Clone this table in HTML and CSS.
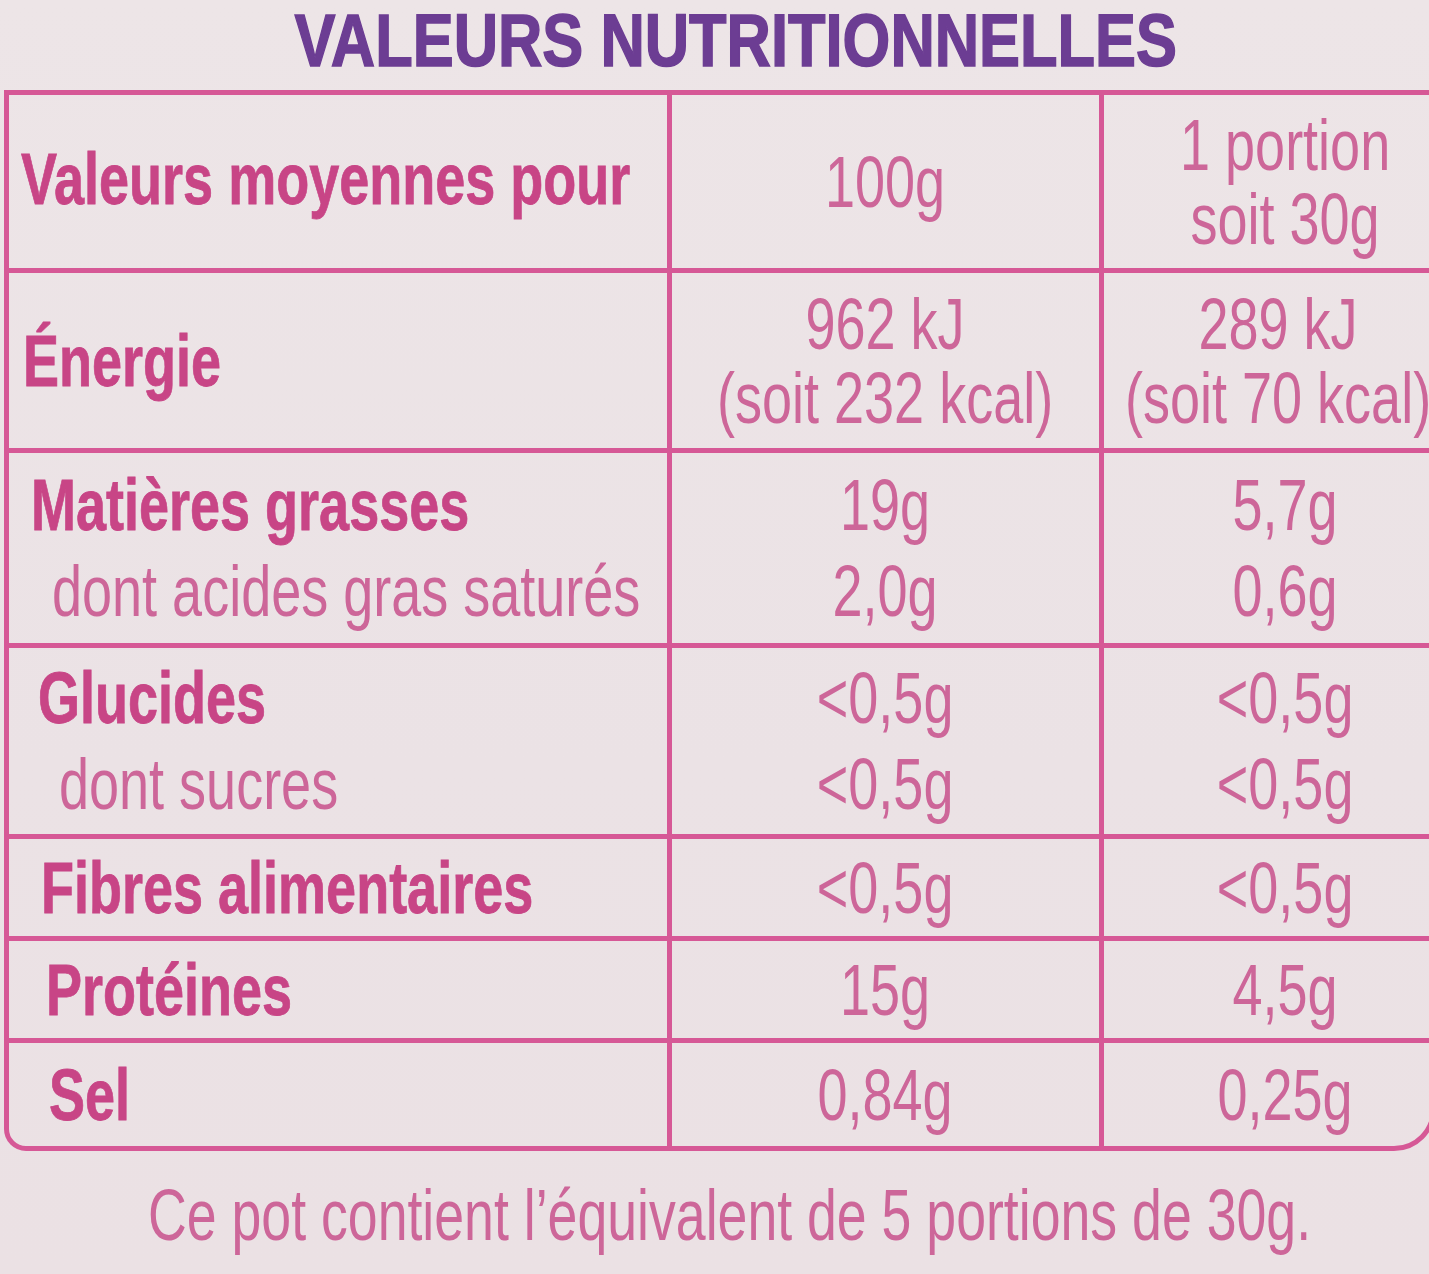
FILE: index.html
```html
<!DOCTYPE html>
<html lang="fr">
<head>
<meta charset="utf-8">
<title>Valeurs nutritionnelles</title>
<link rel="stylesheet" href="styles.css">
</head>
<body>
<div class="page">
  <h1 class="title"><span class="sx">VALEURS NUTRITIONNELLES</span></h1>
  <div class="table">
    <div class="row r-head">
      <div class="cell label"><div class="line"><span class="sx bold">Valeurs moyennes pour</span></div></div>
      <div class="cell c2"><div class="line"><span class="sx">100g</span></div></div>
      <div class="cell c3"><div class="line"><span class="sx">1 portion</span></div><div class="line"><span class="sx">soit 30g</span></div></div>
    </div>
    <div class="row r-energy">
      <div class="cell label"><div class="line"><span class="sx bold">Énergie</span></div></div>
      <div class="cell c2"><div class="line"><span class="sx">962 kJ</span></div><div class="line"><span class="sx">(soit 232 kcal)</span></div></div>
      <div class="cell c3"><div class="line"><span class="sx">289 kJ</span></div><div class="line"><span class="sx">(soit 70 kcal)</span></div></div>
    </div>
    <div class="row r-fat">
      <div class="cell label"><div class="line"><span class="sx bold">Matières grasses</span></div><div class="line sub"><span class="sx">dont acides gras saturés</span></div></div>
      <div class="cell c2"><div class="line"><span class="sx">19g</span></div><div class="line"><span class="sx">2,0g</span></div></div>
      <div class="cell c3"><div class="line"><span class="sx">5,7g</span></div><div class="line"><span class="sx">0,6g</span></div></div>
    </div>
    <div class="row r-carb">
      <div class="cell label"><div class="line"><span class="sx bold">Glucides</span></div><div class="line sub"><span class="sx">dont sucres</span></div></div>
      <div class="cell c2"><div class="line"><span class="sx">&lt;0,5g</span></div><div class="line"><span class="sx">&lt;0,5g</span></div></div>
      <div class="cell c3"><div class="line"><span class="sx">&lt;0,5g</span></div><div class="line"><span class="sx">&lt;0,5g</span></div></div>
    </div>
    <div class="row r-fibre">
      <div class="cell label"><div class="line"><span class="sx bold">Fibres alimentaires</span></div></div>
      <div class="cell c2"><div class="line"><span class="sx">&lt;0,5g</span></div></div>
      <div class="cell c3"><div class="line"><span class="sx">&lt;0,5g</span></div></div>
    </div>
    <div class="row r-prot">
      <div class="cell label"><div class="line"><span class="sx bold">Protéines</span></div></div>
      <div class="cell c2"><div class="line"><span class="sx">15g</span></div></div>
      <div class="cell c3"><div class="line"><span class="sx">4,5g</span></div></div>
    </div>
    <div class="row r-salt">
      <div class="cell label"><div class="line"><span class="sx bold">Sel</span></div></div>
      <div class="cell c2"><div class="line"><span class="sx">0,84g</span></div></div>
      <div class="cell c3"><div class="line"><span class="sx">0,25g</span></div></div>
    </div>
  </div>
  <p class="note"><span class="sx">Ce pot contient l’équivalent de 5 portions de 30g.</span></p>
</div>
</body>
</html>
```
FILE: styles.css
```css
html, body {
  margin: 0;
  padding: 0;
  height: 100%;
  overflow: hidden;
}
body {
  background: #ece3e6;
  background-image: linear-gradient(180deg, #ede5e7 0%, #ebe2e5 60%, #ebe1e4 100%);
  font-family: "Liberation Sans", Arial, sans-serif;
  color: #cd6699;
}
.page {
  width: 1429px;
}
.sx {
  display: inline-block;
  white-space: nowrap;
  transform: scaleX(0.75);
}
.title {
  margin: 0;
  height: 86px;
  padding-top: 4px;
  padding-left: 42px;
  display: flex;
  justify-content: center;
  font-size: 74px;
  line-height: 74px;
  font-weight: 700;
  color: #6c3d93;
  -webkit-text-stroke: 1.5px #6c3d93;
}
.title .sx {
  transform: scaleX(0.83);
  transform-origin: center;
}
.table {
  margin-left: 4px;
  width: 1432px;
  box-sizing: border-box;
  border: 5px solid #d65896;
  border-bottom-left-radius: 22px;
  border-bottom-right-radius: 42px;
}
.row {
  display: grid;
  grid-template-columns: 658px 432px 1fr;
  border-top: 5px solid #d65896;
}
.row:first-child {
  border-top: none;
}
.r-head { height: 173px; }
.r-energy { height: 175px; }
.r-fat { height: 190px; }
.r-carb { height: 186px; }
.r-fibre { height: 97px; }
.r-prot { height: 97px; }
.r-salt { height: 103px; }

.cell {
  display: flex;
  flex-direction: column;
  justify-content: center;
  min-width: 0;
  font-size: 72px;
}
.cell .line {
  display: flex;
  line-height: 80px;
  height: 80px;
}
.r-head .label .line {
  margin-top: -6px;
}
.r-head .c3 .line,
.r-energy .line {
  line-height: 74px;
  height: 74px;
}
.r-fat .line,
.r-carb .line {
  line-height: 86px;
  height: 86px;
}
.label {
  padding-left: 14px;
}
.r-head .label { padding-left: 12px; }
.r-energy .label { padding-left: 14px; }
.r-fat .label { padding-left: 22px; }
.r-carb .label { padding-left: 29px; }
.r-fibre .label { padding-left: 32px; }
.r-prot .label { padding-left: 37px; }
.r-salt .label { padding-left: 40px; }
.label .line {
  justify-content: flex-start;
}
.label .sx {
  transform-origin: left center;
}
.label .sub {
  padding-left: 21px;
}
.bold {
  font-weight: 700;
  color: #c84586;
  -webkit-text-stroke: 0.8px #c84586;
}
.c2, .c3 {
  border-left: 5px solid #d65896;
}
.c2 .line, .c3 .line {
  justify-content: center;
}
.c2 .sx, .c3 .sx {
  transform-origin: center;
}
.c3 {
  padding-left: 36px;
}
.r-energy .c3 {
  padding-left: 22px;
}
.note {
  margin: 24px 0 0 0;
  display: flex;
  justify-content: center;
  padding-left: 30px;
  font-size: 72px;
  line-height: 80px;
  color: #cd6699;
}
.note .sx {
  transform: scaleX(0.745);
  transform-origin: center;
}
```
